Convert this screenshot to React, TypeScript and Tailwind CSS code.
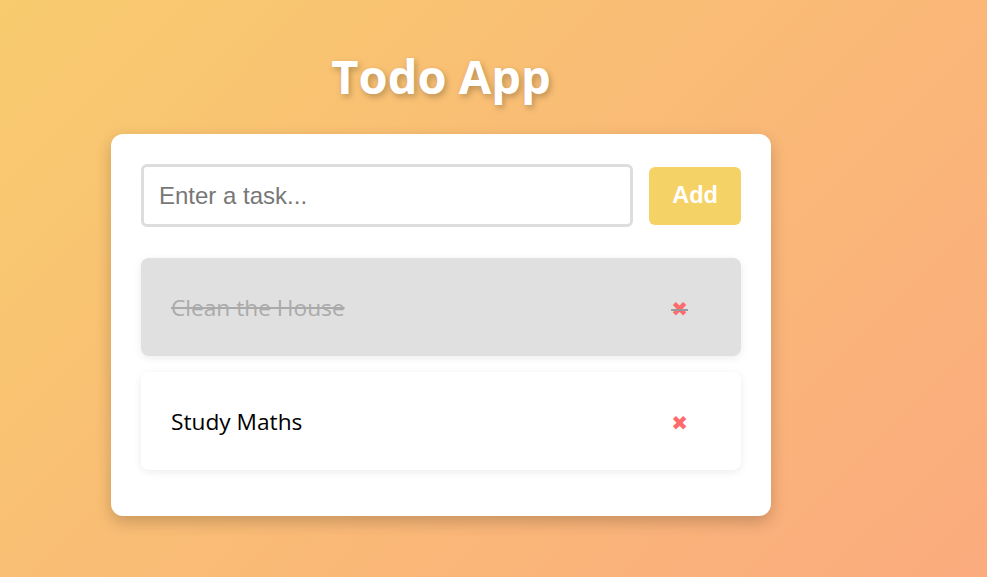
import React, { useState } from 'react';

interface Todo {
  id: number;
  text: string;
  done: boolean;
}

export default function App() {
  const [todos, setTodos] = useState<Todo[]>([
    { id: 1, text: 'Clean the House', done: true },
    { id: 2, text: 'Study Maths', done: false },
  ]);
  const [value, setValue] = useState('');

  const addTodo = () => {
    if (!value.trim()) return;
    setTodos([...todos, { id: Date.now(), text: value.trim(), done: false }]);
    setValue('');
  };

  return (
    <div className="min-h-[577px] w-full bg-[linear-gradient(135deg,#f8cb6e_0%,#fbab7e_100%)] overflow-hidden">
      <div className="ml-[111px] w-[660px] pt-[44px]">
        <h1 className="text-center text-white font-bold text-[47px] leading-[64px] [text-shadow:2px_3px_6px_rgba(0,0,0,0.25)] font-['Open_Sans',sans-serif]">
          Todo App
        </h1>
        <div className="mt-[26px] bg-white rounded-[12px] p-[30px] pb-[46px] shadow-[0_6px_16px_rgba(0,0,0,0.2)]">
          <div className="flex items-center gap-4">
            <input
              value={value}
              onChange={(e) => setValue(e.target.value)}
              placeholder="Enter a task..."
              className="w-[492px] h-[63px] border-[3px] border-[#dddddd] rounded-[6px] px-[15px] text-[24px] outline-none placeholder:text-[#777] font-['Liberation_Sans',Arial,sans-serif]"
            />
            <button
              onClick={addTodo}
              className="w-[92px] h-[58px] bg-[#f5d266] text-white font-bold text-[23.5px] rounded-[6px] font-['Liberation_Sans',Arial,sans-serif]"
            >
              Add
            </button>
          </div>
          <ul className="mt-[31px] flex flex-col gap-4">
            {todos.map((todo) => (
              <li
                key={todo.id}
                onClick={() => setTodos(todos.map((t) => (t.id === todo.id ? { ...t, done: !t.done } : t)))}
                className={`h-[98px] flex items-center justify-between pl-[30px] pr-[53px] pt-[3px] rounded-[8px] shadow-[0_2px_8px_rgba(0,0,0,0.08)] text-[22.7px] font-['Open_Sans',sans-serif] ${
                  todo.done ? 'bg-[#e0e0e0] text-[#aaaaaa] line-through' : 'bg-white text-black'
                }`}
              >
                <span>{todo.text}</span>
                <button
                  onClick={(e) => {
                    e.stopPropagation();
                    setTodos(todos.filter((t) => t.id !== todo.id));
                  }}
                  className={`text-[#ff6b6b] text-[20px] font-['DejaVu_Sans',sans-serif] ${todo.done ? 'line-through decoration-[#999]' : ''}`}
                >
                  ✖
                </button>
              </li>
            ))}
          </ul>
        </div>
      </div>
    </div>
  );
}
